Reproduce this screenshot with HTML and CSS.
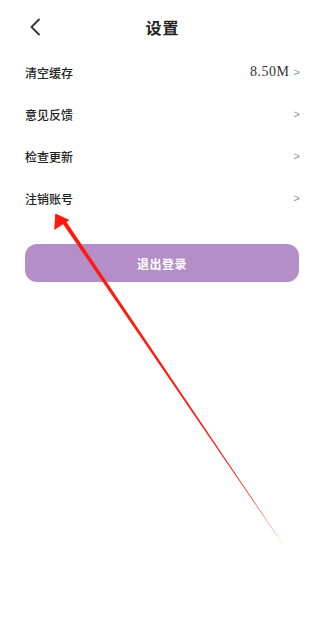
FILE: index.html
```html
<!DOCTYPE html>
<html lang="zh-CN">
<head>
<meta charset="utf-8">
<title>设置</title>
<link rel="stylesheet" href="styles.css">
</head>
<body>
<div class="page">
  <header class="header">
    <svg class="back" width="12" height="18" viewBox="0 0 12 18"><path d="M10 1.5 L2.5 9 L10 16.5" fill="none" stroke="#333" stroke-width="1.8" stroke-linecap="round" stroke-linejoin="round"/></svg>
    <h1 class="title">设置</h1>
  </header>
  <ul class="list">
    <li class="row"><span class="label">清空缓存</span><span class="right"><span class="value">8.50M</span><span class="chev">&gt;</span></span></li>
    <li class="row"><span class="label">意见反馈</span><span class="right"><span class="chev">&gt;</span></span></li>
    <li class="row"><span class="label">检查更新</span><span class="right"><span class="chev">&gt;</span></span></li>
    <li class="row"><span class="label">注销账号</span><span class="right"><span class="chev">&gt;</span></span></li>
  </ul>
  <div class="btn-wrap"><button class="logout">退出登录</button></div>
  <svg class="arrow" width="317" height="644" viewBox="0 0 317 644">
    <polygon points="62,222.5 65.5,220.5 286,549" fill="#ff1a0e"/>
    <polygon points="55.3,213.5 54.2,230 69.5,220" fill="#ff1a0e"/>
  </svg>
</div>
</body>
</html>
```
FILE: styles.css
```css
html, body {
  margin: 0;
  padding: 0;
  background: #fff;
}
body {
  font-family: "Noto Sans CJK SC", "Noto Sans", sans-serif;
  color: #222;
}
.page {
  position: relative;
  width: 317px;
  height: 644px;
  overflow: hidden;
}
.header {
  height: 51px;
  padding-top: 3px;
  padding-left: 8px;
  box-sizing: border-box;
  display: flex;
  align-items: center;
  justify-content: center;
  position: relative;
}
.back {
  position: absolute;
  left: 29px;
  top: 18px;
}
.title {
  margin: 0;
  font-size: 16px;
  font-weight: 700;
  color: #222;
  letter-spacing: 1px;
}
.list {
  list-style: none;
  margin: 0;
  padding: 0;
}
.row {
  height: 42px;
  display: flex;
  align-items: center;
  justify-content: space-between;
  padding: 0 17px 0 25px;
}
.label {
  font-size: 12px;
  font-weight: 500;
  color: #222;
}
.right {
  display: flex;
  align-items: center;
  gap: 4px;
}
.value {
  font-family: "Liberation Serif", "DejaVu Serif", serif;
  font-size: 14px;
  color: #333;
  letter-spacing: 0.5px;
}
.chev {
  font-family: "Liberation Sans", sans-serif;
  font-size: 11px;
  color: #8a8fa8;
}
.btn-wrap {
  padding: 25px 18px 0 25px;
}
.logout {
  display: block;
  width: 100%;
  height: 38px;
  border: none;
  border-radius: 12px;
  background: #b48fc7;
  color: #fff;
  font-family: "Noto Sans CJK SC", sans-serif;
  font-size: 12px;
  font-weight: 700;
  letter-spacing: 0.5px;
}
.arrow {
  position: absolute;
  left: 0;
  top: 0;
  pointer-events: none;
}
```
